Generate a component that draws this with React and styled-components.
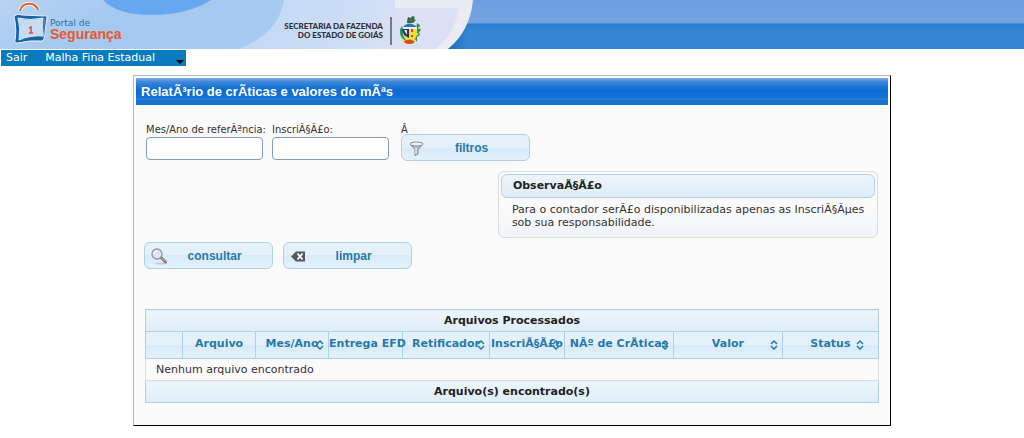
import React from 'react';
import styled, { createGlobalStyle } from 'styled-components';

const condensed = '"DejaVu Sans Condensed", "DejaVu Sans", Verdana, sans-serif';
const verdana = '"DejaVu Sans", Verdana, sans-serif';
const arial = '"Liberation Sans", Arial, sans-serif';

const Global = createGlobalStyle`
  *, *::before, *::after { box-sizing: border-box; }
  body { margin: 0; background: #fff; font: 11px/13px ${verdana}; color: #333; }
`;

const Banner = styled.header`
  height: 49px;
  overflow: hidden;
  background: linear-gradient(#6f9fe4, #71a4df 23px, #2a7ed2 24px, #3486d4 30px, #3486d4);
  svg { display: block; }
`;

const Menu = styled.nav`
  display: flex;
  width: fit-content;
  height: 16px;
  margin: 1px 0 0 1px;
  background: #0a7cbd;
`;
const MenuLink = styled.a`
  display: flex;
  align-items: center;
  padding: 0 5px;
  margin-right: 8px;
  font: 11px/14px ${verdana};
  color: #fff;
  text-decoration: none;
`;
const Caret = styled.span`
  align-self: flex-end;
  margin: 0 2px 2px 8px;
  border: 4px solid transparent;
  border-top-color: #000;
  border-bottom: 0;
`;

const Panel = styled.main`
  margin: 9px 13% 11px;
  padding: 2px;
  border: 1px solid #000;
  border-top-color: #bbb;
  border-left-color: #bbb;
  background: #fafafa;
`;
const Title = styled.h1`
  margin: 0;
  padding: 0 5px;
  font: bold 13px/27px ${arial};
  color: #fff;
  background: linear-gradient(#7fb0e6, #3d86da 4px, #0a6cd3 12px, #1271d6 20px, #3180d6 21px, #1570cf 22px);
`;
const Content = styled.div`
  padding: 18px 9px 20px 8px;
`;
const Filters = styled.form`
  display: flex;
  align-items: flex-start;
  gap: 9px;
  padding-left: 2px;
  font-family: ${condensed};
`;
const Field = styled.label`
  display: flex;
  flex-direction: column;
  gap: 1px;
  width: 117px;
  white-space: nowrap;
`;
const Input = styled.input`
  width: 100%;
  height: 23px;
  padding: 0 5px;
  border: 1px solid #7f9db9;
  border-radius: 4px;
  background: #fff;
  font: 11px/13px ${condensed};
`;
const FilterAction = styled.div`
  margin-left: 3px;
`;
const Spacer = styled.div`
  height: 11px;
`;
const Button = styled.button`
  position: relative;
  width: 129px;
  height: 27px;
  padding: 0 0 0 12px;
  border: 1px solid #aed0ea;
  border-radius: 6px;
  background: linear-gradient(#e4f1fb 0 50%, #d7ebf9 50%, #e4f1fb);
  font: bold 12px/14px ${arial};
  color: #2779aa;
  svg { position: absolute; left: 6px; top: 5px; }
`;
const Note = styled.section`
  width: 380px;
  margin: 10px 1px 4px auto;
  padding: 2px;
  border: 1px solid #ddd;
  border-radius: 6px;
  background: linear-gradient(#fafafa 60%, #eff3f8);
`;
const NoteTitle = styled.h2`
  margin: 0;
  padding: 0 11px;
  border: 1px solid #aed0ea;
  border-radius: 6px;
  background: linear-gradient(#ecf5fc, #deedf7);
  font: bold 11px/22px ${verdana};
  color: #222;
`;
const NoteText = styled.p`
  margin: 0;
  padding: 5px 0 6px 11px;
`;
const Actions = styled.div`
  display: flex;
  gap: 10px;
  margin-bottom: 40px;
`;
const Grid = styled.table`
  width: calc(100% - 1px);
  margin-left: 1px;
  table-layout: fixed;
  border-collapse: collapse;
`;
const Band = styled.th`
  height: 22px;
  padding: 0;
  border: 1px solid #aed0ea;
  background: linear-gradient(#ecf5fc, #deedf7);
  font: bold 11px/13px ${verdana};
  color: #222;
`;
const HeadRow = styled.tr`
  background: linear-gradient(#e4f1fb 0 50%, #d7ebf9 50%, #e4f1fb);
`;
const Head = styled.th`
  position: relative;
  height: 27px;
  padding: 0 0 3px;
  border: 1px solid #aed0ea;
  font: bold 11px/13px ${verdana};
  color: #2779aa;
  white-space: nowrap;
  svg { position: absolute; right: ${p => (p.$last ? 14 : 4)}px; top: 8px; }
`;
const Empty = styled.td`
  height: 22px;
  padding: 0 10px;
  border: 1px solid #ddd;
`;

const columns = [
  ['', 37], ['Arquivo', 73], ['Mes/Ano', 73, true], ['Entrega EFD', 74], ['Retificador', 87, true],
  ['InscriÃ§Ã£o', 75, true], ['NÂº de CrÃticas', 109, true], ['Valor', 109, true], ['Status', 96, true],
];
const total = columns.reduce((sum, c) => sum + c[1], 0);

const SortIcon = () => (
  <svg width="8" height="10" viewBox="0 0 8 10" fill="none" stroke="#2779aa" strokeWidth="1.5" aria-hidden="true">
    <path d="M1 4 4 1l3 3M1 6l3 3 3-3" />
  </svg>
);
const Funnel = () => (
  <svg width="17" height="17" viewBox="0 0 17 17" aria-hidden="true">
    <path d="M2 4 7 9.500V15.500l3-1.700V9.500L15 4z" fill="#b9bbbd" stroke="#808386" />
    <path d="M8 8v6" stroke="#fff" />
    <ellipse cx="8.500" cy="4" rx="6.500" ry="2" fill="#f0f0f0" stroke="#8a8c8e" />
  </svg>
);
const Magnifier = () => (
  <svg width="17" height="17" viewBox="0 0 17 17" aria-hidden="true">
    <ellipse cx="10" cy="15.500" rx="6" ry="1" fill="#c3ccd2" />
    <path d="m10 9.500 4.500 4.500" stroke="#777" strokeWidth="2.800" strokeLinecap="round" />
    <path d="m11 10.300 3.300 3.300" stroke="#ccc" />
    <circle cx="6" cy="6" r="5" fill="#dce9f4" stroke="#9097a2" strokeWidth="1.300" />
    <path d="M3 6a3 3 0 0 1 3-3" stroke="#fff" fill="none" strokeWidth="1.500" />
  </svg>
);
const Backspace = () => (
  <svg width="17" height="17" viewBox="0 0 17 17" aria-hidden="true">
    <path d="m1 8.500 5-5h9v10H6z" fill="#55585c" />
    <path d="m7.500 5.500 5 6m0-6-5 6" stroke="#fff" strokeWidth="1.800" />
  </svg>
);

const Crest = () => (
  <g>
    <path d="m407 21 1-4 3 1 1-2 3 1-1 2 2 1-3 3h-6z" fill="#22753d" />
    <path d="M410 19h2v2h-2zM413 20h2v1h-2z" fill="#c53b2d" />
    <path d="M402 26q-5 6 1 13l3 2-2-9zM417 23l3 2-1 3 2 2-2 2 1 3-3 2 0 4-3 1 2-12z" fill="#249455" />
    <path d="M418 27l2 1-2 1zM417 33l2 1-2 1z" fill="#e8e3b0" />
    <path d="M403 27q6-7 14 0z" fill="#2379b8" />
    <path d="M403 27h14v2h-14z" fill="#e9f0f2" />
    <path d="M403 29h14v6q-1 5-7 6-6-1-7-6z" fill="#f3df35" />
    <path d="M402 29h7v9l-5-3z" fill="#2c2d76" />
    <path d="m404 30 3 5v-5z" fill="#e9eaf4" />
    <path d="M411 29h2v3h-2zM411 35h2v2h-2z" fill="#d8422f" />
    <path d="M402 39q8 5 14 0v3q-7 4-13 0z" fill="#f3df35" />
    <path d="M404 41q6-3 10 0v2q-5 2-9 0z" fill="#d8492f" />
  </g>
);

const BannerArt = () => (
  <svg width="475" height="49" viewBox="0 0 475 49" role="img" aria-label="Portal de Segurança">
    <defs>
      <linearGradient id="sky" x2="1" y2=".3">
        <stop offset="0" stopColor="#b6d3f2" />
        <stop offset=".5" stopColor="#a4c8ef" />
        <stop offset="1" stopColor="#a6caf0" />
      </linearGradient>
      <linearGradient id="haze" gradientUnits="userSpaceOnUse" x1="260" y1="0" x2="395" y2="40">
        <stop offset="0" stopColor="#c3d9f5" />
        <stop offset=".7" stopColor="#cddef6" />
        <stop offset="1" stopColor="#dbe0f4" />
      </linearGradient>
      <linearGradient id="shade" x2="1">
        <stop offset="0" stopColor="#185ca5" />
        <stop offset="1" stopColor="#3486d4" stopOpacity="0" />
      </linearGradient>
    </defs>
    <path d="M445 24h30v25h-30z" fill="url(#shade)" />
    <path d="M0 0h473q-3 31-25 49H0z" fill="#ebebf3" />
    <path d="M394 8h65q-4 26-24 41h-41z" fill="#dbe0f4" />
    <path d="M0 0h395v49H0z" fill="url(#haze)" />
    <path d="M0 0h284q-6 35-46 49H0z" fill="url(#sky)" />
    <path d="M103 0h108q-24 15-59 15T103 0z" fill="#65a8ef" />
    <path d="M20 11C22 2 35 1 38 10" fill="none" stroke="#f2f5fb" strokeWidth="4" />
    <path d="M20 11C22 2 35 1 38 10" fill="none" stroke="#e65b2b" strokeWidth="2" />
    <path d="M14 16q4-3 8-1l22 1q3-1 3 1l-3 22-2 2q-13-1-24 2-4 0-3-3 2-10-1-24z" fill="#1763a4" stroke="#e6effa" />
    <path d="M18 18q12 3 25 0-2 10 1 18-14-1-25 4 2-11-1-22z" fill="#c5dbf4" stroke="#fff" strokeWidth=".8" />
    <path d="M45 18q-2 9-1 18" fill="none" stroke="#4d92cb" />
    <path d="M29 28l2-1v6m-2 0h4" stroke="#e24e20" strokeWidth="1.500" fill="none" />
    <text x="50" y="26" fontFamily={verdana} fontSize="9" fill="#2870ac">Portal de</text>
    <text x="50" y="39" fontFamily={arial} fontWeight="bold" fontSize="14" fill="#e8592c">Segurança</text>
    <g fontFamily="Lato, sans-serif" fontWeight="900" fontSize="8" fill="#303039" textAnchor="end">
      <text x="383" y="29">SECRETARIA DA FAZENDA</text>
      <text x="383" y="38">DO ESTADO DE GOIÁS</text>
    </g>
    <path d="M391 17v28" stroke="#555866" strokeWidth="1.500" />
    <Crest />
  </svg>
);

export default function App() {
  return (
    <>
      <Global />
      <Banner><BannerArt /></Banner>
      <Menu>
        <MenuLink href="#sair">Sair</MenuLink>
        <MenuLink href="#malha">Malha Fina Estadual</MenuLink>
        <Caret />
      </Menu>
      <Panel>
        <Title>RelatÃ³rio de crÃticas e valores do mÃªs</Title>
        <Content>
          <Filters onSubmit={e => e.preventDefault()}>
            <Field>Mes/Ano de referÃªncia:<Input /></Field>
            <Field>InscriÃ§Ã£o:<Input /></Field>
            <FilterAction>
              <Spacer>Â</Spacer>
              <Button type="button"><Funnel />filtros</Button>
            </FilterAction>
          </Filters>
          <Note>
            <NoteTitle>ObservaÃ§Ã£o</NoteTitle>
            <NoteText>Para o contador serÃ£o disponibilizadas apenas as InscriÃ§Ãµes sob sua responsabilidade.</NoteText>
          </Note>
          <Actions>
            <Button type="button"><Magnifier />consultar</Button>
            <Button type="button"><Backspace />limpar</Button>
          </Actions>
          <Grid>
            <colgroup>
              {columns.map(([name, w]) => <col key={name} style={{ width: `${(w / total) * 100}%` }} />)}
            </colgroup>
            <thead>
              <tr><Band colSpan={9}>Arquivos Processados</Band></tr>
              <HeadRow>
                {columns.map(([name, , sort]) => (
                  <Head key={name} scope="col" $last={name === 'Status'}>{name}{sort && <SortIcon />}</Head>
                ))}
              </HeadRow>
            </thead>
            <tbody><tr><Empty colSpan={9}>Nenhum arquivo encontrado</Empty></tr></tbody>
            <tfoot><tr><Band colSpan={9}>Arquivo(s) encontrado(s)</Band></tr></tfoot>
          </Grid>
        </Content>
      </Panel>
    </>
  );
}
